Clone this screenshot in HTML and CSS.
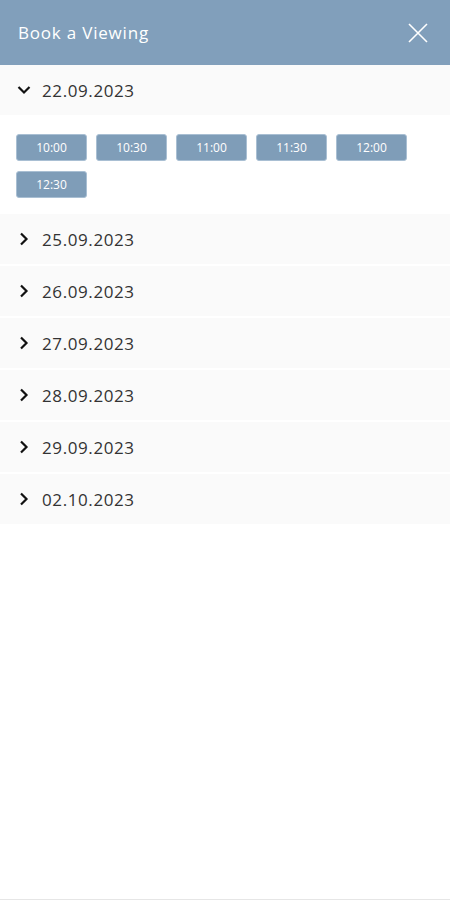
FILE: index.html
```html
<!DOCTYPE html>
<html>
<head>
    <title>Book a Viewing</title>
    <meta name="viewport" content="width=device-width, initial-scale=1">
    <meta charset="UTF-8">
    <link rel="stylesheet" href="styles.css">
</head>
<body>
    <div class="modal">
        <div class="header">
            <h1>Book a Viewing</h1>
            <button class="close" aria-label="Close">
                <svg width="20" height="20" viewBox="0 0 20 20"><path d="M1 1 L19 19 M19 1 L1 19" stroke="#fff" stroke-width="1.6" fill="none"/></svg>
            </button>
        </div>

        <div class="day open">
            <div class="day-head">
                <svg class="chev" width="16" height="16" viewBox="0 0 16 16"><path d="M2.5 5 L8 10.5 L13.5 5" stroke="#111" stroke-width="2.2" fill="none"/></svg>
                <span>22.09.2023</span>
            </div>
            <div class="slots">
                <button class="slot">10:00</button>
                <button class="slot">10:30</button>
                <button class="slot">11:00</button>
                <button class="slot">11:30</button>
                <button class="slot">12:00</button>
                <button class="slot">12:30</button>
            </div>
        </div>

        <div class="day"><div class="day-head"><svg class="chev" width="16" height="16" viewBox="0 0 16 16"><path d="M5 2.5 L10.5 8 L5 13.5" stroke="#111" stroke-width="2.2" fill="none"/></svg><span>25.09.2023</span></div></div>
        <div class="day"><div class="day-head"><svg class="chev" width="16" height="16" viewBox="0 0 16 16"><path d="M5 2.5 L10.5 8 L5 13.5" stroke="#111" stroke-width="2.2" fill="none"/></svg><span>26.09.2023</span></div></div>
        <div class="day"><div class="day-head"><svg class="chev" width="16" height="16" viewBox="0 0 16 16"><path d="M5 2.5 L10.5 8 L5 13.5" stroke="#111" stroke-width="2.2" fill="none"/></svg><span>27.09.2023</span></div></div>
        <div class="day"><div class="day-head"><svg class="chev" width="16" height="16" viewBox="0 0 16 16"><path d="M5 2.5 L10.5 8 L5 13.5" stroke="#111" stroke-width="2.2" fill="none"/></svg><span>28.09.2023</span></div></div>
        <div class="day"><div class="day-head"><svg class="chev" width="16" height="16" viewBox="0 0 16 16"><path d="M5 2.5 L10.5 8 L5 13.5" stroke="#111" stroke-width="2.2" fill="none"/></svg><span>29.09.2023</span></div></div>
        <div class="day"><div class="day-head"><svg class="chev" width="16" height="16" viewBox="0 0 16 16"><path d="M5 2.5 L10.5 8 L5 13.5" stroke="#111" stroke-width="2.2" fill="none"/></svg><span>02.10.2023</span></div></div>
    </div>
</body>
</html>
```

FILE: styles.css
```css
body {
    font-family: 'Open Sans', sans-serif;
    margin: 0;
    padding: 0;
    background: #fff;
    min-height: 100vh;
    box-sizing: border-box;
    border-bottom: 1px solid #e6e6e6;
}

.header {
    display: flex;
    align-items: center;
    justify-content: space-between;
    height: 65px;
    padding: 0 22px 0 18px;
    background: #819fbb;
}

h1 {
    margin: 0;
    color: #fff;
    font-size: 17px;
    font-weight: 400;
    letter-spacing: 0.8px;
}

.close {
    background: none;
    border: none;
    padding: 0;
    display: flex;
    cursor: pointer;
}

.day {
    margin-bottom: 2px;
}

.day-head {
    display: flex;
    align-items: center;
    gap: 10px;
    height: 50px;
    padding: 0 16px;
    background: #fafafa;
    color: #333;
    font-size: 17px;
    letter-spacing: 0.6px;
}

.slots {
    display: flex;
    flex-wrap: wrap;
    gap: 10px 9px;
    padding: 19px 16px 14px 16px;
    width: 400px;
}

.slot {
    width: 71px;
    height: 27px;
    background: #7f9db8;
    border: 1px solid #a9bfd3;
    border-radius: 3px;
    color: #fff;
    font-family: 'Open Sans', sans-serif;
    font-size: 12px;
    padding: 0;
    cursor: pointer;
}
```
